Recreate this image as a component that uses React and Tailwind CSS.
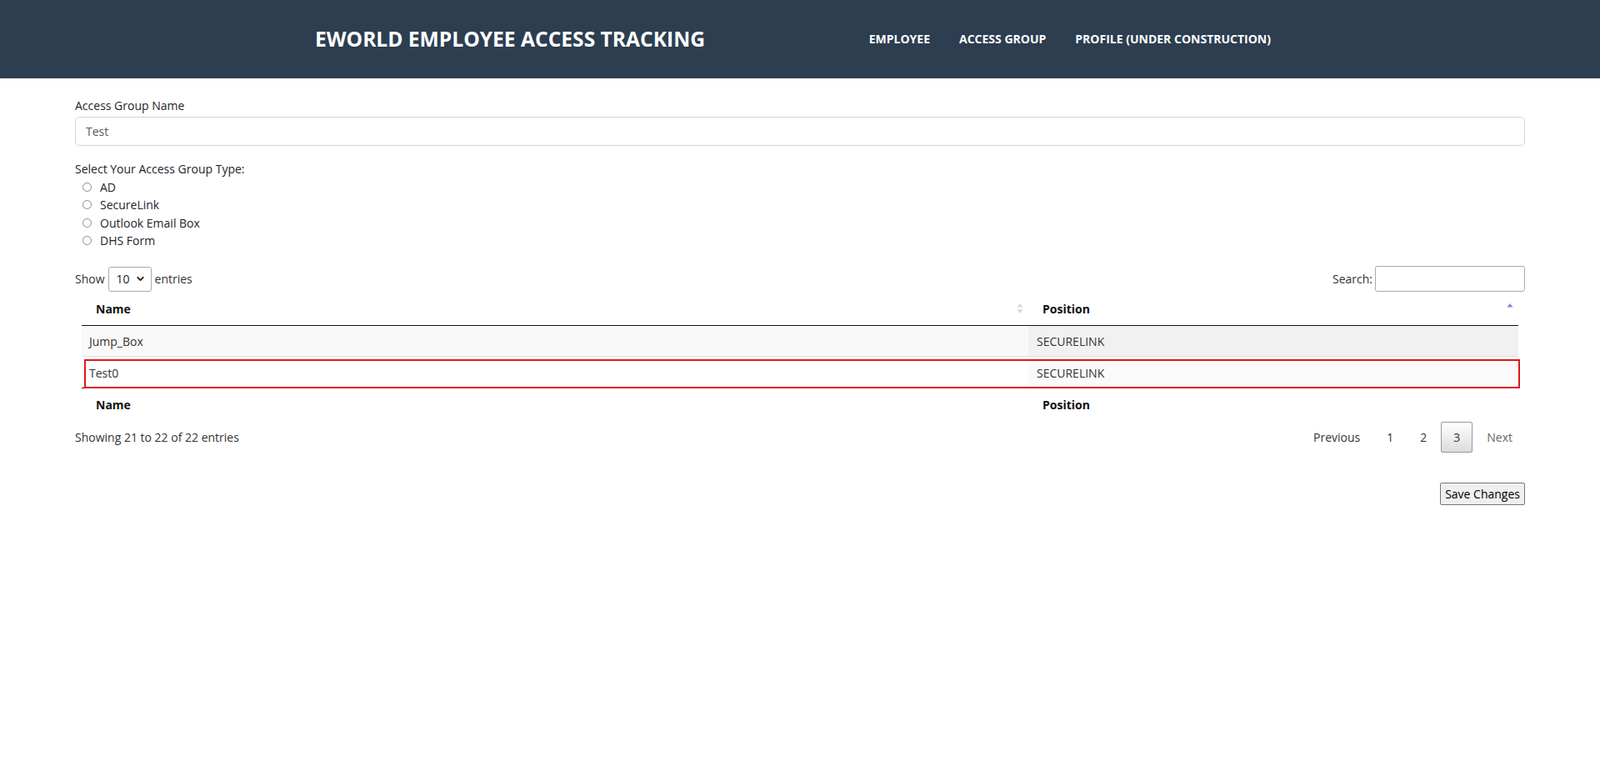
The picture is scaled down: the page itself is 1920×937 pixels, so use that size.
import React from 'react';
import { ChevronDown } from 'lucide-react';

const font = { fontFamily: '"Open Sans", "Noto Sans", sans-serif' };

const SortBoth = () => (
  <svg width="8" height="14" viewBox="0 0 8 14" className="shrink-0">
    <path d="M4 1 L7.5 5.5 H0.5 Z" fill="#d8d8d8" />
    <path d="M4 13 L7.5 8.5 H0.5 Z" fill="#d8d8d8" />
  </svg>
);

const SortAsc = () => (
  <svg width="8" height="14" viewBox="0 0 8 14" className="shrink-0">
    <path d="M4 1 L7.5 5.5 H0.5 Z" fill="#7f86d6" />
  </svg>
);

const Radio = ({ label }) => (
  <label className="flex items-center h-[21.5px] pl-[9px]">
    <span className="w-[11px] h-[11px] rounded-full border border-[#8a8a8a] bg-white mr-[10px]" />
    <span>{label}</span>
  </label>
);

const rows = [
  { name: 'Jump_Box', position: 'SECURELINK' },
  { name: 'Test0', position: 'SECURELINK' },
];

export default function App() {
  return (
    <div className="min-h-screen bg-white text-[#333] text-[14px]" style={font}>
      {/* Top bar */}
      <header className="h-[94px] bg-[#2c3e50] flex items-center">
        <div className="mx-auto w-[1164px] flex items-center text-white font-bold">
          <h1 className="text-[24.6px]">EWORLD EMPLOYEE ACCESS TRACKING</h1>
          <nav className="ml-auto flex items-center gap-[35px] text-[14px] pr-[17px]">
            <a>EMPLOYEE</a>
            <a>ACCESS GROUP</a>
            <a>PROFILE (UNDER CONSTRUCTION)</a>
          </nav>
        </div>
      </header>

      <main className="px-[90px] pt-[23px]">
        <div className="leading-5 text-[#212529]">Access Group Name</div>
        <input
          defaultValue="Test"
          className="mt-[3px] w-full h-[35px] rounded-[5px] border border-[#ced4da] px-[12px] text-[#5a5a5a] outline-none"
        />

        <div className="mt-[17px] leading-[21.5px] text-[#212529]">
          <div>Select Your Access Group Type:</div>
          <Radio label="AD" />
          <Radio label="SecureLink" />
          <Radio label="Outlook Email Box" />
          <Radio label="DHS Form" />
        </div>

        {/* Table controls */}
        <div className="mt-[20px] flex items-center justify-between h-[30px]">
          <div className="flex items-center gap-[4px]">
            <span>Show</span>
            <div className="relative w-[52px] h-[30px] rounded-[3px] border border-[#aaa] flex items-center pl-[9px]">
              <span className="text-[#222]">10</span>
              <ChevronDown size={13} strokeWidth={3.5} className="absolute right-[6px] text-[#222]" />
            </div>
            <span>entries</span>
          </div>
          <div className="flex items-center gap-[3px]">
            <span>Search:</span>
            <input className="w-[180px] h-[31px] rounded-[3px] border border-[#aaa] outline-none" />
          </div>
        </div>

        {/* Table */}
        <div className="mx-[8px] mt-[1px]">
          <div className="grid grid-cols-[1136fr_588fr] h-[40px] border-b border-[#111] font-bold text-[#111]">
            <div className="flex items-center pl-[17px] pr-[6px]">
              <span>Name</span>
              <span className="ml-auto"><SortBoth /></span>
            </div>
            <div className="flex items-center pl-[17px] pr-[6px]">
              <span>Position</span>
              <span className="ml-auto"><SortAsc /></span>
            </div>
          </div>

          {rows.map((r, i) => (
            <div
              key={r.name}
              className={`relative grid grid-cols-[1136fr_588fr] h-[37px] ${i === 0 ? 'border-b border-[#ddd]' : ''}`}
            >
              <div className={`flex items-center pl-[9px] pt-[2px] ${i === 0 ? 'bg-[#f9f9f9]' : 'bg-white'}`}>{r.name}</div>
              <div className={`flex items-center pl-[10px] pt-[2px] ${i === 0 ? 'bg-[#f1f1f1]' : 'bg-[#fafafa]'}`}>{r.position}</div>
              {i === 1 && (
                <div className="absolute left-[3px] -right-[2px] top-[3px] -bottom-[1px] border-2 border-[#e0161b] z-10" />
              )}
            </div>
          ))}

          <div className="grid grid-cols-[1136fr_588fr] h-[40px] border-t border-[#111] font-bold text-[#111]">
            <div className="flex items-center pl-[17px]">Name</div>
            <div className="flex items-center pl-[17px]">Position</div>
          </div>
        </div>

        {/* Info + paging */}
        <div className="mt-[1px] flex items-center justify-between">
          <div>Showing 21 to 22 of 22 entries</div>
          <div className="flex items-center text-[#333]">
            <span className="px-[14px] py-[7px] border border-transparent ml-[2px]">Previous</span>
            <span className="px-[14px] py-[7px] border border-transparent ml-[2px]">1</span>
            <span className="px-[14px] py-[7px] border border-transparent ml-[2px]">2</span>
            <span className="px-[14px] py-[7px] border border-[#979797] rounded-[2px] ml-[2px] bg-gradient-to-b from-white to-[#dcdcdc]">3</span>
            <span className="px-[14px] py-[7px] border border-transparent ml-[2px] text-[#666]">Next</span>
          </div>
        </div>

        <div className="mt-[36px] flex justify-end">
          <button className="h-[27px] px-[5px] rounded-[2px] border border-[#767676] bg-[#efefef] text-black text-[14px]">
            Save Changes
          </button>
        </div>
      </main>
    </div>
  );
}
